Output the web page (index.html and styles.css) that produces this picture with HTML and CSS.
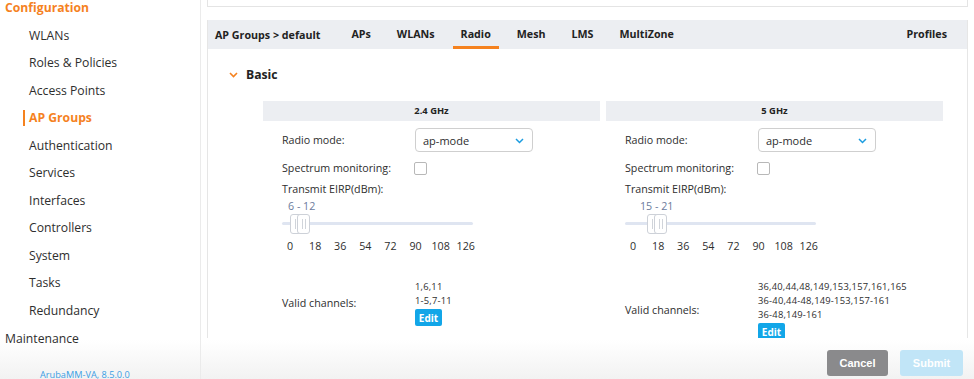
FILE: index.html
```html
<!DOCTYPE html>
<html>
<head>
<meta charset="utf-8">
<link rel="stylesheet" href="styles.css">
</head>
<body>
<div class="app">
  <aside class="sidebar">
    <ul class="nav">
      <li class="nav-head">Configuration</li>
      <li class="nav-item">WLANs</li>
      <li class="nav-item">Roles &amp; Policies</li>
      <li class="nav-item">Access Points</li>
      <li class="nav-item active">AP Groups</li>
      <li class="nav-item">Authentication</li>
      <li class="nav-item">Services</li>
      <li class="nav-item">Interfaces</li>
      <li class="nav-item">Controllers</li>
      <li class="nav-item">System</li>
      <li class="nav-item">Tasks</li>
      <li class="nav-item">Redundancy</li>
      <li class="nav-top">Maintenance</li>
    </ul>
    <div class="version">ArubaMM-VA, 8.5.0.0</div>
  </aside>
  <main class="main">
    <div class="top-card"></div>
    <section class="panel">
      <div class="tabs">
        <span class="tab-title">AP Groups &gt; default</span>
        <span class="tab">APs</span>
        <span class="tab">WLANs</span>
        <span class="tab current">Radio</span>
        <span class="tab">Mesh</span>
        <span class="tab">LMS</span>
        <span class="tab">MultiZone</span>
        <span class="tab profiles">Profiles</span>
      </div>
      <div class="panel-body">
        <div class="section-head">
          <svg class="chev" width="9" height="6" viewBox="0 0 9 6"><path d="M1 1 L4.5 4.5 L8 1" fill="none" stroke="#f5821f" stroke-width="1.6"/></svg>
          <span>Basic</span>
        </div>
        <div class="cols">
          <div class="col">
            <div class="col-head">2.4 GHz</div>
            <div class="row r-mode">
              <span class="lbl">Radio mode:</span>
              <div class="select"><span>ap-mode</span>
                <svg width="9" height="6" viewBox="0 0 9 6"><path d="M1 1 L4.5 4.5 L8 1" fill="none" stroke="#1a9ce0" stroke-width="1.5"/></svg>
              </div>
            </div>
            <div class="row r-spec">
              <span class="lbl">Spectrum monitoring:</span>
              <span class="check"></span>
            </div>
            <div class="lbl r-eirp">Transmit EIRP(dBm):</div>
            <div class="slider">
              <div class="range-lbl lbl-a">6 - 12</div>
              <div class="track"></div>
              <span class="handle" style="left:8px"></span>
              <span class="handle" style="left:15px"></span>
            </div>
            <div class="ticks"><span>0</span><span>18</span><span>36</span><span>54</span><span>72</span><span>90</span><span>108</span><span>126</span></div>
            <div class="row r-chan">
              <span class="lbl">Valid channels:</span>
              <div class="chan-vals">
                <div>1,6,11</div>
                <div>1-5,7-11</div>
                <button class="edit">Edit</button>
              </div>
            </div>
          </div>
          <div class="col">
            <div class="col-head">5 GHz</div>
            <div class="row r-mode">
              <span class="lbl">Radio mode:</span>
              <div class="select"><span>ap-mode</span>
                <svg width="9" height="6" viewBox="0 0 9 6"><path d="M1 1 L4.5 4.5 L8 1" fill="none" stroke="#1a9ce0" stroke-width="1.5"/></svg>
              </div>
            </div>
            <div class="row r-spec">
              <span class="lbl">Spectrum monitoring:</span>
              <span class="check"></span>
            </div>
            <div class="lbl r-eirp">Transmit EIRP(dBm):</div>
            <div class="slider">
              <div class="range-lbl lbl-b">15 - 21</div>
              <div class="track"></div>
              <span class="handle" style="left:22px"></span>
              <span class="handle" style="left:29px"></span>
            </div>
            <div class="ticks"><span>0</span><span>18</span><span>36</span><span>54</span><span>72</span><span>90</span><span>108</span><span>126</span></div>
            <div class="row r-chan">
              <span class="lbl">Valid channels:</span>
              <div class="chan-vals">
                <div>36,40,44,48,149,153,157,161,165</div>
                <div>36-40,44-48,149-153,157-161</div>
                <div>36-48,149-161</div>
                <button class="edit">Edit</button>
              </div>
            </div>
          </div>
        </div>
      </div>
    </section>
    <footer class="footer">
      <button class="btn cancel">Cancel</button>
      <button class="btn submit">Submit</button>
    </footer>
  </main>
</div>
</body>
</html>
```

FILE: styles.css
```css
* { box-sizing: border-box; }
html, body { margin: 0; padding: 0; }
body {
  width: 974px;
  height: 379px;
  overflow: hidden;
  font-family: "Open Sans", "Noto Sans", sans-serif;
  color: #2e2e2e;
  background: linear-gradient(to bottom, #ffffff 0, #ffffff 340px, #f2f2f2 379px);
}
.app { display: flex; height: 379px; }

.sidebar {
  width: 201px;
  flex: none;
  border-right: 1px solid #ebebeb;
  display: flex;
  flex-direction: column;
}
.nav { list-style: none; margin: -6px 0 0 0; padding: 0; }
.nav li { height: 27.55px; line-height: 27.55px; font-size: 12.2px; white-space: nowrap; }
.nav-head { padding-left: 5px; color: #f5821f; font-weight: 700; }
.nav-top { padding-left: 5px; }
.nav-item { padding-left: 29px; position: relative; }
.nav-item.active { color: #f5821f; font-weight: 700; }
.nav-item.active::before {
  content: ""; position: absolute; left: 23px; top: 6px; width: 2px; height: 16px; background: #f5821f;
}
.version { margin-top: 17px; padding-left: 40px; font-size: 9.2px; line-height: 12px; color: #3a9ee4; }

.main { flex: 1; display: flex; flex-direction: column; padding: 0 6px 0 6px; min-width: 0; }
.top-card {
  height: 7px; border: 1px solid #e4e4e4; border-top: none; background: #fff; margin-bottom: 13px; flex: none;
}
.panel {
  flex: 1; min-height: 0; overflow: hidden;
  border-left: 1px solid #e6e6e6; border-right: 1px solid #e6e6e6; background: #fff;
}
.tabs {
  height: 29px; background: #eceef2; display: flex; align-items: stretch; gap: 10px;
  padding: 0 20px 0 7px; font-size: 10.7px; font-weight: 700; color: #222;
}
.tabs span { display: flex; align-items: center; }
.tab-title { margin-right: 13px; }
.tab { padding: 0 8px; border-bottom: 3px solid transparent; padding-top: 1px; }
.tab.current { border-bottom-color: #f5821f; }
.tab.profiles { margin-left: auto; padding-right: 0; }

.panel-body { padding: 0 0 0 55px; }
.section-head {
  height: 24px; margin: 13px 0 0 -34px; display: flex; align-items: center; gap: 8px;
  font-size: 12.2px; font-weight: 700; color: #222;
}
.chev { margin-top: 1px; }
.cols { display: grid; grid-template-columns: 337px 337px; gap: 6px; margin-top: 15px; }
.col { font-size: 10.7px; }
.col-head {
  height: 20px; background: #eceef2; text-align: center; line-height: 20px;
  font-size: 9.4px; font-weight: 700; color: #222;
}
.row { display: flex; align-items: center; padding-left: 19px; }
.lbl { width: 133px; flex: none; }
.r-mode { margin-top: 7px; height: 24px; }
.select {
  width: 118px; height: 24px; border: 1px solid #cfcfcf; border-radius: 4px;
  display: flex; align-items: center; justify-content: space-between; padding: 0 8px 0 7px; font-size: 11px;
}
.select svg { margin-top: 1px; }
.r-spec { margin-top: 4px; height: 24px; }
.check { width: 13px; height: 13px; border: 1px solid #b8b8b8; border-radius: 2px; margin-left: -1px; background: #fff; }
.r-eirp { padding-left: 19px; width: auto; height: 18px; line-height: 18px; margin-top: 0; }
.slider { position: relative; height: 39px; margin-left: 19px; width: 191px; }
.range-lbl { position: absolute; top: 1px; color: #6b7b9c; font-size: 10.7px; line-height: 15px; }
.lbl-a { left: 6px; }
.lbl-b { left: 15px; }
.track { position: absolute; left: 0; right: 0; top: 24px; height: 3px; background: #dfe5f1; border-radius: 2px; }
.handle {
  position: absolute; top: 16px; width: 13px; height: 20px; background: #fff;
  border: 1px solid #cdd1d8; border-radius: 3px;
}
.handle::before, .handle::after {
  content: ""; position: absolute; top: 4px; width: 1px; height: 10px; background: #d0d4da;
}
.handle::before { left: 4px; }
.handle::after { left: 7px; }
.ticks { display: flex; padding-left: 14.5px; height: 18px; line-height: 18px; margin-top: 0; }
.ticks span { width: 25.1px; text-align: center; flex: none; }
.r-chan { margin-top: 25px; align-items: center; }
.chan-vals { font-size: 9.4px; line-height: 14px; letter-spacing: 0.2px; }
.edit {
  display: block; margin-top: 1px; width: 27px; height: 17px; border: none; border-radius: 2px;
  background: #12a6e8; color: #fff; font-family: "Open Sans", sans-serif; font-weight: 700; font-size: 10px; padding: 0;
}

.footer { height: 41px; flex: none; display: flex; justify-content: flex-end; align-items: flex-start; gap: 12px; padding: 12px 5px 0 0; }
.btn {
  height: 26px; border: none; border-radius: 3px; color: #fff; font-family: "Liberation Sans", Arial, sans-serif;
  font-weight: 700; font-size: 11px; padding: 0;
}
.cancel { width: 61px; background: #8a8a8c; }
.submit { width: 63px; background: #c1e5f7; }
```
